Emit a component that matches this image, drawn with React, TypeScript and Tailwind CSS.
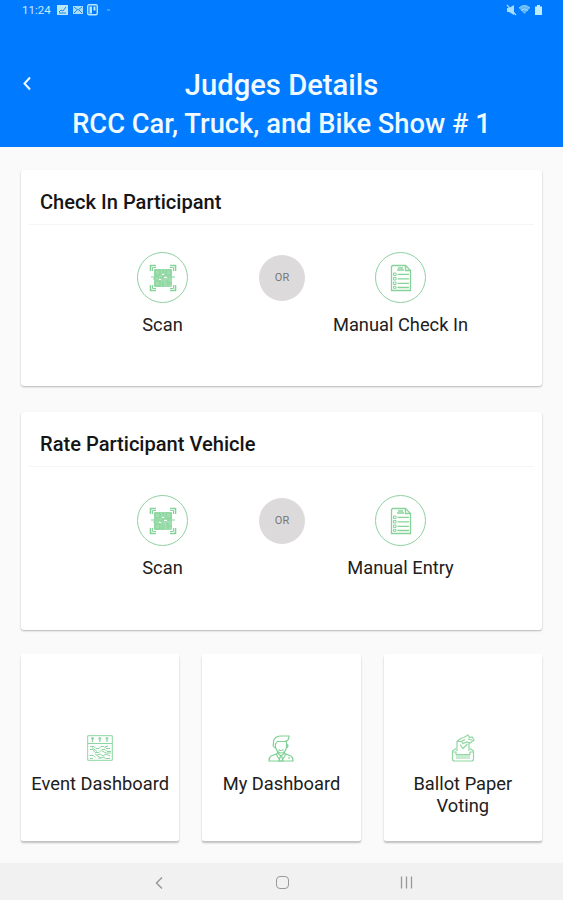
import type { ReactNode } from "react";

type PanelProps = {
    title: string;
    manualLabel: string;
    className?: string;
    bodyClassName?: string;
}

type TileProps = {
    label: string;
    icon: ReactNode;
}

const ScanIcon = () => (
    <svg width="28" height="28" viewBox="0 0 28 28" fill="none" stroke="#86d39a" strokeWidth="1.6">
        <path d="M1.5 7V1.5H7M21 1.5h5.5V7M26.5 21v5.5H21M7 26.5H1.5V21" />
        <path d="M3.5 7V3.5H7M21 3.5h3.5V7M24.5 21v3.5H21M7 24.500H3.500V21" strokeWidth="1" />
        <rect x="5" y="5" width="18" height="18" rx="1" fill="#a0deb0" stroke="none" />
        <path d="M6 6h5v5H6zM17 6h5v5h-5zM6 17h5v5H6zM14 5v4M2 13h8M11 14h3v-3M18 13h8M17 17h2v5M14 17v6M20 19h3M4 15h3" strokeWidth="1.1" />
        <path d="M13 10h2v1h-2zM15 13h3v1h-3zM10 15h2v1h-2z" fill="#fff" stroke="none" />
    </svg>
);

const ChecklistIcon = () => (
    <svg width="22" height="28" viewBox="0 0 22 28" fill="none" stroke="#86d39a" strokeWidth="1.3">
        <path d="M2.5 1.500h13l5 5v20h-19v-24z" />
        <path d="M15.5 1.5v5h5M7 6h7M8 4h5" />
        <path d="M3.5 9h2.5v2.5H3.5zM3.5 13.5h2.5V16H3.5zM3.5 18h2.5v2.5H3.5zM3.5 22.3h2.5v2H3.5z" strokeWidth="1" />
        <path d="M7.500 10.3H19M7.500 14.8H19M7.500 19.3H19M7.500 23.5H19" />
    </svg>
);

const EventIcon = () => (
    <svg width="26" height="26" viewBox="0 0 26 26" fill="none" stroke="#8ed6a1" strokeWidth="1">
        <path d="M.7.7h24.6v24.6H.7zM.7 8.5h24.6" />
        <path d="M5.5 2v5M12.8 2v5M20 2v5M4 3.5h3M11.3 3.5h3M18.5 3.5h3" strokeWidth="1.3" />
        <path d="M3 11.500h4l2 2h3l2-2h3l2 2h4M3 14.500h3l2 3h4l3-3h3l2 2h4M5 12.500l5 4M15 16l4 2h5M2.500 20.500h4l2 2M10 20l3-1 3 2 3-2 4 2M3 23.500h3M11 23h3l2-1 3 1.500h4M8 19l6 4M18 12l3-1" />
    </svg>
);

const PersonIcon = () => (
    <svg width="26" height="27" viewBox="0 0 26 27" fill="none" stroke="#7fd195" strokeWidth="1.2">
        <path d="M5.500 10V6c1-4 4-5 8-5h7.500c0 4-2 5.500-5 5.500H9.500L7.500 9v3c1 4 3 6 5.500 6s5-2 5.500-6V6" />
        <path d="M5.500 9c-1 2 0 3 2 4M18.5 13c1.5-1 2-2 1-4M10.5 14.500q2.500 2 5 0" />
        <path d="M9.5 16.5v2L3 21c-1.5 1-2 3-2 5h24c0-2-.5-4-2-5l-6.5-2.5v-2" />
        <path d="M9.5 18l3.5 3 3.5-3M8 19l3 5 2-3 2 3 3-5M12 22l-1 4h4l-1-4zM20 23h2" />
    </svg>
);

const BallotIcon = () => (
    <svg width="24" height="28" viewBox="0 0 24 28" fill="none" stroke="#90d7a2" strokeWidth="1.2">
        <path d="M5 14.500L1.500 17v8c0 1.200.8 2 2 2h17c1.200 0 2-.8 2-2v-8L19 14.500" />
        <path d="M6 17V7.500h5M18 9v8M9 10.500l3 4 4.500-4.500" />
        <path d="M6 7.500c2-2 4-4 7-4l4-2.500 1.500 2.500L21 3l2 3-4 3-3-1-4 1.500-1.500-2L14 5.500M17 5l4 1" />
        <path d="M2 18h3v2.500h14V18h3M5 22h14M5 24h14" />
    </svg>
);

const IconRing = ({ children }: { children: ReactNode }) => (
    <div className="size-[51px] rounded-full border border-[#8fd0a1] flex items-center justify-center">{children}</div>
);

const StatusBar = () => (
    <div className="h-5 flex items-center pl-[22px] pr-5 text-[#c7eaff]">
        <span className="text-[11.5px] leading-5 w-[35px]">11:24</span>
        <svg width="56" height="12" viewBox="0 0 56 12">
            <path d="M0 1h11v10H0z" fill="#b9e7fa" />
            <path d="M2 8l2-2 2 1 3-4M2 9h7" fill="none" stroke="#2388e8" />
            <path d="M16 2h10v8H16z" fill="#a5dcf8" />
            <path d="M17 3l4 3 4-3M17 9l3-3M25 9l-3-3" fill="none" stroke="#2b8de9" />
            <rect x="30.7" y=".7" width="9.6" height="10" rx="1.5" fill="none" stroke="#b9e7fa" strokeWidth="1.4" />
            <path d="M32.500 2.500h2.500v7h-2.500zM36.500 2.500h2v4h-2z" fill="#b9e7fa" />
            <path d="M50 6h3" stroke="#74c1fa" />
        </svg>
        <svg className="ml-auto" width="38" height="12" viewBox="0 0 38 12">
            <path d="M2 4h2l5-3v10L4 8H2z" fill="#a8dcfb" />
            <path d="M2 1l9 10" stroke="#a8dcfb" strokeWidth="1.2" />
            <path d="M14 4q5.500-5 11 0l-5.500 6z" fill="#62b7f9" />
            <path d="M14 4q5.500-5 11 0M16 6.500q3.500-3 7 0" fill="none" stroke="#9bd9f8" />
            <path d="M30 2.500h2V1h3v1.500h2V11h-7z" fill="#c0ebfb" />
        </svg>
    </div>
);

const Panel = ({ title, manualLabel, className = "", bodyClassName = "pt-[27px]" }: PanelProps) => (
    <section className={`bg-white rounded-[3px] shadow-[0_1px_2px_rgba(0,0,0,0.28)] px-2 ${className}`}>
        <h2 className="h-[55px] pt-[20px] pl-[11px] text-[20.1px] leading-6 font-medium text-[#151515] border-b border-[#f5f5f5]">{title}</h2>
        <div className={`grid grid-cols-[267px_1fr] ${bodyClassName}`}>
            <div className="flex flex-col items-center gap-[10px] relative">
                <IconRing><ScanIcon /></IconRing>
                <span className="text-[18.3px] leading-6">Scan</span>
                <span className="absolute left-[230px] top-[3px] size-[46px] rounded-full bg-[#dcdadb] text-[#777] text-[11px] flex items-center justify-center">OR</span>
            </div>
            <div className="flex flex-col items-center gap-[10px] pr-[29px]">
                <IconRing><ChecklistIcon /></IconRing>
                <span className="text-[18.3px] leading-6 whitespace-nowrap">{manualLabel}</span>
            </div>
        </div>
    </section>
);

const Tile = ({ label, icon }: TileProps) => (
    <div className="h-[187px] bg-white rounded-[2px] shadow-[0_2px_2px_rgba(0,0,0,0.24)] pt-[80px] flex flex-col items-center">
        <div className="h-7 flex items-center">{icon}</div>
        <span className="mt-[11px] px-1 text-center text-[18.3px] leading-[22px]">{label}</span>
    </div>
);

const App = () => {
    return (
        <div className="w-[563px] h-[900px] overflow-hidden flex flex-col bg-[#fafafa] font-[Roboto,sans-serif] text-[#202020]">
            <header className="h-[147px] shrink-0 bg-[#007bff] text-[#f1faff]">
                <StatusBar />
                <div className="grid grid-cols-[56px_1fr_56px] pt-[46px]">
                    <svg className="ml-[22px] mt-[10px]" width="10" height="15" viewBox="0 0 10 15" fill="none" stroke="currentColor" strokeWidth="2">
                        <path d="M8 1.5L2.5 7.5 8 13.5" />
                    </svg>
                    <div className="text-center font-medium whitespace-nowrap">
                        <h1 className="text-[29.2px] leading-[38px]">Judges Details</h1>
                        <p className="text-[27.3px] leading-[41px]">RCC Car, Truck, and Bike Show # 1</p>
                    </div>
                </div>
            </header>
            <main className="flex-1 px-[21px] pt-[23px]">
                <Panel title="Check In Participant" manualLabel="Manual Check In" className="h-[216px]" />
                <Panel title="Rate Participant Vehicle" manualLabel="Manual Entry" className="h-[218px] mt-[26px]" bodyClassName="pt-[28px]" />
                <div className="grid grid-cols-3 gap-[23px] mt-[24px]">
                    <Tile label="Event Dashboard" icon={<EventIcon />} />
                    <Tile label="My Dashboard" icon={<PersonIcon />} />
                    <Tile label="Ballot Paper Voting" icon={<BallotIcon />} />
                </div>
            </main>
            <nav className="h-[37px] shrink-0 bg-[#f1f1f1] flex items-center justify-between pl-[154px] pr-[150px] pt-[2px] text-[#999]">
                <svg width="10" height="14" viewBox="0 0 10 14" fill="none" stroke="currentColor" strokeWidth="1.5">
                    <path d="M8 1.500L2.500 7l5.500 5.500" />
                </svg>
                <div className="size-[13px] rounded-[4px] border-[1.5px] border-[#999]"></div>
                <svg width="13" height="13" viewBox="0 0 13 13" stroke="currentColor" strokeWidth="1.3">
                    <path d="M1.500 .5v12M6.500 .5v12M11.500 .5v12" />
                </svg>
            </nav>
        </div>
    );
};

export default App;
